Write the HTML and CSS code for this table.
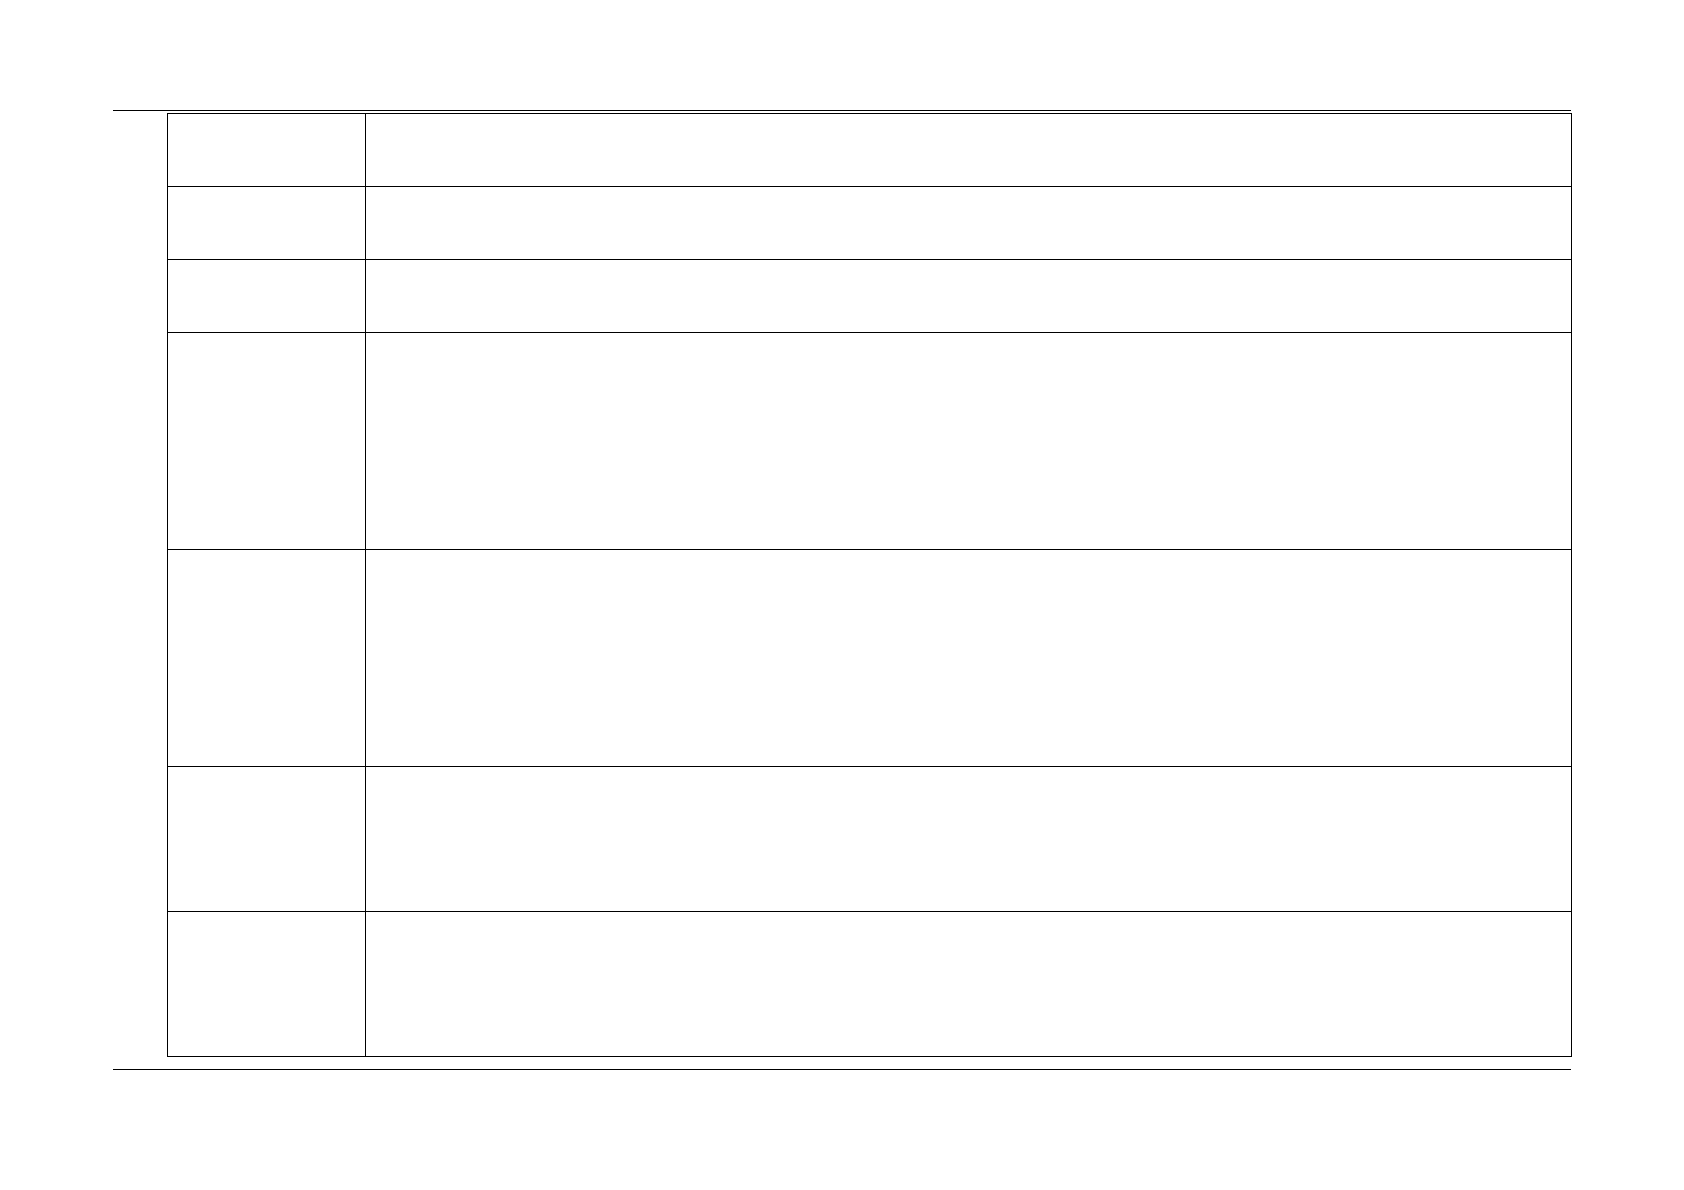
FILE: index.html
```html
<!DOCTYPE html>
<html lang="en">
<head>
<meta charset="utf-8">
<title>Table</title>
<link rel="stylesheet" href="styles.css">
</head>
<body>
<div class="page">
  <div class="rule"></div>
  <div class="grid">
    <div class="cell"></div><div class="cell"></div>
    <div class="cell"></div><div class="cell"></div>
    <div class="cell"></div><div class="cell"></div>
    <div class="cell"></div><div class="cell"></div>
    <div class="cell"></div><div class="cell"></div>
    <div class="cell"></div><div class="cell"></div>
    <div class="cell"></div><div class="cell"></div>
  </div>
  <div class="rule rule-bottom"></div>
</div>
</body>
</html>
```
FILE: styles.css
```css
html, body {
  margin: 0;
  padding: 0;
  background: #ffffff;
  font-family: "Liberation Sans", Arial, sans-serif;
}
.page {
  padding: 110px 0 0 113px;
}
.rule {
  width: 1458px;
  height: 1px;
  background: #000000;
}
.rule-bottom {
  margin-top: 12px;
}
.grid {
  margin: 2px 0 0 54px;
  display: grid;
  grid-template-columns: 198px 1206px;
  grid-template-rows: 73px 73px 73px 217px 217px 145px 145px;
  width: 1405px;
  box-sizing: border-box;
  border-left: 1px solid #000000;
  border-top: 1px solid #000000;
}
.cell {
  box-sizing: border-box;
  border-right: 1px solid #000000;
  border-bottom: 1px solid #000000;
}
```
